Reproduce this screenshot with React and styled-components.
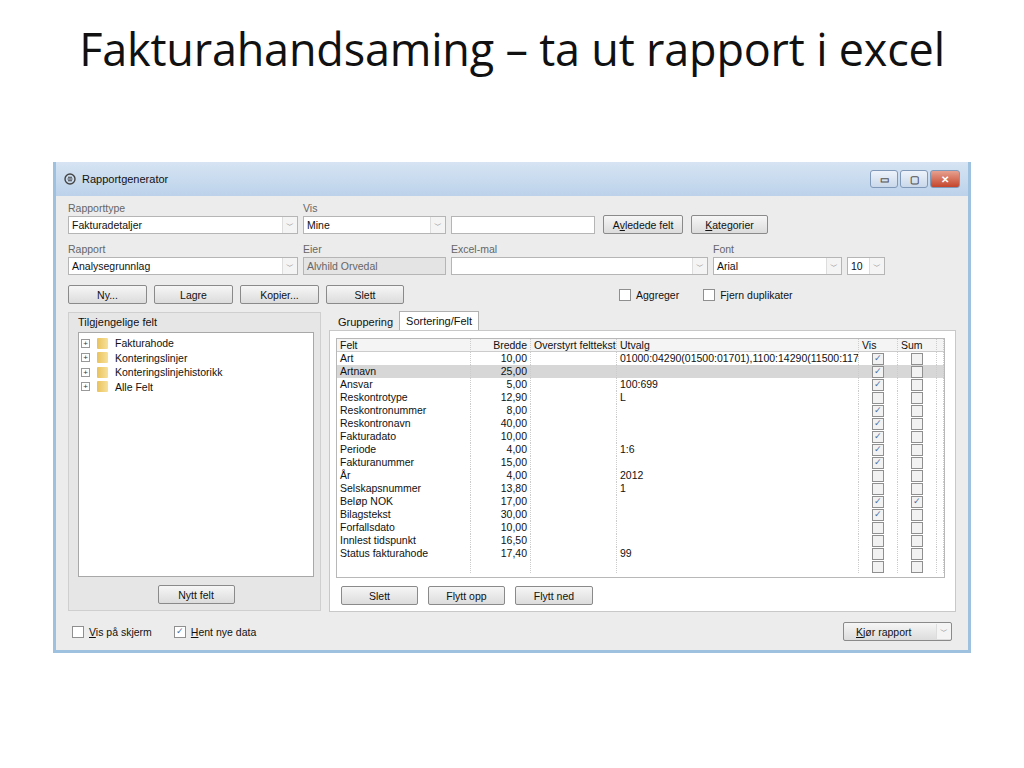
import styled, { createGlobalStyle } from 'styled-components';

const Global = createGlobalStyle`
  body { margin: 0; background: #fff; font-family: "Liberation Sans", Arial, sans-serif; }
`;

const Slide = styled.div`
  width: 1024px;
  height: 768px;
  display: flex;
  flex-direction: column;
  align-items: center;
`;

const Title = styled.h1`
  margin: 18px 0 0;
  height: 144px;
  font-weight: normal;
  font-size: 45px;
  color: #111;
  font-family: "Open Sans", "Liberation Sans", sans-serif;
  letter-spacing: -0.2px;
`;

const Win = styled.div`
  width: 912px;
  height: 488px;
  border: 3px solid #9fc1e0;
  border-top-width: 0;
  background: #ececec;
  font-size: 10.5px;
  color: #111;
  display: flex;
  flex-direction: column;
`;

const TitleBar = styled.div`
  height: 34px;
  background: linear-gradient(#d6e4f3, #bcd2ea);
  display: flex;
  align-items: center;
  padding: 0 8px;
  gap: 6px;
  font-size: 11px;
`;

const WinBtns = styled.div`
  margin-left: auto;
  display: flex;
  gap: 2px;
`;

const WinBtn = styled.div`
  width: ${p => (p.close ? 28 : 26)}px;
  height: 16px;
  border: 1px solid #8199b8;
  border-radius: 3px;
  background: ${p => (p.close ? 'linear-gradient(#e7a08f,#c4452c)' : 'linear-gradient(#eef3fa,#c9d8eb)')};
  color: ${p => (p.close ? '#fff' : '#555')};
  font-size: 10px;
  font-weight: bold;
  display: flex;
  align-items: center;
  justify-content: center;
`;

const Body = styled.div`
  flex: 1;
  padding: 6px 12px 0 12px;
  display: flex;
  flex-direction: column;
`;

const Row = styled.div`
  display: flex;
  align-items: flex-end;
  gap: ${p => p.gap || 5}px;
  margin-top: ${p => p.mt || 0}px;
`;

const Field = styled.div`
  display: flex;
  flex-direction: column;
  gap: 2px;
  width: ${p => p.w}px;
`;

const Label = styled.span`
  color: #666;
`;

const Input = styled.div`
  height: 16px;
  border: 1px solid #b5b5b5;
  background: ${p => (p.ro ? '#e4e4e4' : '#fff')};
  color: ${p => (p.ro ? '#666' : '#111')};
  display: flex;
  align-items: center;
  padding-left: 3px;
  white-space: nowrap;
`;

const Arrow = styled.span`
  margin-left: auto;
  width: 14px;
  height: 16px;
  border-left: 1px solid #ddd;
  background: #f4f4f4;
  display: flex;
  align-items: center;
  justify-content: center;
  color: #777;
  font-size: 8px;
`;

const Btn = styled.div`
  width: ${p => p.w}px;
  height: 17px;
  border: 1px solid #8a8a8a;
  border-radius: 2px;
  background: linear-gradient(#f6f6f6, #dcdcdc);
  display: flex;
  align-items: center;
  justify-content: center;
  flex-shrink: 0;
  u { text-decoration: underline; }
`;

const Check = styled.span`
  width: 10px;
  height: 10px;
  border: 1px solid #8f8f8f;
  background: ${p => (p.dim ? '#f2f2f2' : '#fff')};
  display: inline-flex;
  align-items: center;
  justify-content: center;
  color: #4a6fa5;
  font-size: 9px;
  line-height: 1;
  flex-shrink: 0;
`;

const CheckLabel = styled.label`
  display: flex;
  align-items: center;
  gap: 5px;
`;

const Main = styled.div`
  display: flex;
  gap: 8px;
  margin-top: 8px;
  height: 299px;
`;

const LeftPanel = styled.div`
  width: 256px;
  border: 1px solid #cfcfcf;
  background: #e6e6e6;
  display: flex;
  flex-direction: column;
  padding: 0 6px 6px 9px;
`;

const PanelHead = styled.div`
  font-size: 11px;
  padding: 3px 0 4px;
`;

const TreeBox = styled.div`
  background: #fff;
  border: 1px solid #a8a8a8;
  height: 242px;
  padding: 3px 2px;
`;

const TreeItem = styled.div`
  display: flex;
  align-items: center;
  gap: 3px;
  height: 14.5px;
`;

const Plus = styled.span`
  width: 7px;
  height: 7px;
  border: 1px solid #999;
  font-size: 8px;
  line-height: 7px;
  text-align: center;
  color: #333;
  margin-right: 4px;
`;

const Folder = styled.span`
  width: 11px;
  height: 11px;
  background: linear-gradient(90deg, #e8c35b, #f6e19b);
  border-radius: 1px;
  margin-right: 4px;
`;

const Center = styled.div`
  display: flex;
  justify-content: center;
  margin-top: 8px;
  gap: 10px;
`;

const RightSide = styled.div`
  flex: 1;
  display: flex;
  flex-direction: column;
`;

const Tabs = styled.div`
  display: flex;
  align-items: flex-end;
  height: 18px;
  padding-left: 3px;
`;

const Tab = styled.div`
  padding: 0 6px;
  height: ${p => (p.active ? 18 : 16)}px;
  display: flex;
  align-items: center;
  font-size: 11px;
  background: ${p => (p.active ? '#fff' : 'transparent')};
  border: ${p => (p.active ? '1px solid #b0b0b0' : 'none')};
  border-bottom: none;
`;

const TabPanel = styled.div`
  flex: 1;
  background: #fff;
  border: 1px solid #c8c8c8;
  padding: 7px 10px 6px 6px;
  display: flex;
  flex-direction: column;
`;

const Grid = styled.div`
  border: 1px solid #b8b8b8;
  height: 238px;
  display: grid;
  grid-template-columns: 134px 60px 86px 242px 39px 39px 1fr;
  grid-auto-rows: 13px;
  align-content: start;
  overflow: hidden;
`;

const Cell = styled.div`
  padding: 0 3px;
  border-right: 1px dotted #ccc;
  background: ${p => (p.head ? '#f4f4f4' : p.sel ? '#d7d7d7' : 'transparent')};
  border-bottom: ${p => (p.head ? '1px solid #ccc' : 'none')};
  text-align: ${p => p.align || 'left'};
  white-space: nowrap;
  overflow: hidden;
  line-height: 13px;
  display: ${p => (p.box ? 'flex' : 'block')};
  align-items: center;
  justify-content: center;
`;

const Footer = styled.div`
  display: flex;
  align-items: center;
  gap: 22px;
  padding: 11px 4px 0;
`;

const rows = [
  ['Art', '10,00', '01000:04290(01500:01701),1100:14290(11500:1170', 1, 0],
  ['Artnavn', '25,00', '', 1, 0],
  ['Ansvar', '5,00', '100:699', 1, 0],
  ['Reskontrotype', '12,90', 'L', 0, 0],
  ['Reskontronummer', '8,00', '', 1, 0],
  ['Reskontronavn', '40,00', '', 1, 0],
  ['Fakturadato', '10,00', '', 1, 0],
  ['Periode', '4,00', '1:6', 1, 0],
  ['Fakturanummer', '15,00', '', 1, 0],
  ['År', '4,00', '2012', 0, 0],
  ['Selskapsnummer', '13,80', '1', 0, 0],
  ['Beløp NOK', '17,00', '', 1, 1],
  ['Bilagstekst', '30,00', '', 1, 0],
  ['Forfallsdato', '10,00', '', 0, 0],
  ['Innlest tidspunkt', '16,50', '', 0, 0],
  ['Status fakturahode', '17,40', '99', 0, 0],
  ['', '', '', 0, 0],
];

const Select = ({ children, ro }) => (
  <Input ro={ro}>
    {children}
    {!ro && <Arrow>﹀</Arrow>}
  </Input>
);

export default function App() {
  return (
    <Slide>
      <Global />
      <Title>Fakturahandsaming – ta ut rapport i excel</Title>
      <Win>
        <TitleBar>
          <svg width="12" height="12" viewBox="0 0 12 12">
            <circle cx="6" cy="6" r="5" fill="none" stroke="#444" strokeWidth="1.4" />
            <path d="M3.5 6h5M4 4.2h4M4 7.8h4" stroke="#444" strokeWidth="1.1" />
          </svg>
          Rapportgenerator
          <WinBtns>
            <WinBtn>▭</WinBtn>
            <WinBtn>▢</WinBtn>
            <WinBtn close>✕</WinBtn>
          </WinBtns>
        </TitleBar>
        <Body>
          <Row>
            <Field w={230}><Label>Rapporttype</Label><Select>Fakturadetaljer</Select></Field>
            <Field w={143}><Label>Vis</Label><Select>Mine</Select></Field>
            <Field w={144}><Input /></Field>
            <Row gap={8} style={{ marginLeft: 3 }}>
              <Btn w={78}>A<u>v</u>ledede felt</Btn>
              <Btn w={75}><u>K</u>ategorier</Btn>
            </Row>
          </Row>
          <Row mt={9}>
            <Field w={230}><Label>Rapport</Label><Select>Analysegrunnlag</Select></Field>
            <Field w={143}><Label>Eier</Label><Select ro>Alvhild Orvedal</Select></Field>
            <Field w={257}><Label>Excel-mal</Label><Select /></Field>
            <Field w={129}><Label>Font</Label><Select>Arial</Select></Field>
            <Field w={38}><Select>10</Select></Field>
          </Row>
          <Row mt={10} gap={7} style={{ alignItems: 'center' }}>
            <Btn w={77}>Ny...</Btn>
            <Btn w={77}>Lagre</Btn>
            <Btn w={77}>Kopier...</Btn>
            <Btn w={76}>Slett</Btn>
            <Row gap={24} style={{ marginLeft: 208, alignItems: 'center' }}>
              <CheckLabel><Check />Aggreger</CheckLabel>
              <CheckLabel><Check />Fjern duplikater</CheckLabel>
            </Row>
          </Row>
          <Main>
            <LeftPanel>
              <PanelHead>Tilgjengelige felt</PanelHead>
              <TreeBox>
                {['Fakturahode', 'Konteringslinjer', 'Konteringslinjehistorikk', 'Alle Felt'].map(t => (
                  <TreeItem key={t}><Plus>+</Plus><Folder />{t}</TreeItem>
                ))}
              </TreeBox>
              <Center><Btn w={75}>Nytt felt</Btn></Center>
            </LeftPanel>
            <RightSide>
              <Tabs>
                <Tab>Gruppering</Tab>
                <Tab active>Sortering/Felt</Tab>
              </Tabs>
              <TabPanel>
                <Grid>
                  <Cell head>Felt</Cell>
                  <Cell head align="right">Bredde</Cell>
                  <Cell head>Overstyrt felttekst</Cell>
                  <Cell head>Utvalg</Cell>
                  <Cell head>Vis</Cell>
                  <Cell head>Sum</Cell>
                  <Cell head />
                  {rows.map(([f, b, u, v, s], i) => {
                    const sel = i === 1;
                    return [
                      <Cell key={i + 'a'} sel={sel}>{f}</Cell>,
                      <Cell key={i + 'b'} sel={sel} align="right">{b}</Cell>,
                      <Cell key={i + 'c'} sel={sel} />,
                      <Cell key={i + 'd'} sel={sel}>{u}</Cell>,
                      <Cell key={i + 'e'} sel={sel} box><Check dim>{v ? '✓' : ''}</Check></Cell>,
                      <Cell key={i + 'f'} sel={sel} box><Check dim>{s ? '✓' : ''}</Check></Cell>,
                      <Cell key={i + 'g'} sel={sel} />,
                    ];
                  })}
                </Grid>
                <Row mt={8} gap={10} style={{ paddingLeft: 5 }}>
                  <Btn w={75}>Slett</Btn>
                  <Btn w={75}>Flytt opp</Btn>
                  <Btn w={76}>Flytt ned</Btn>
                </Row>
              </TabPanel>
            </RightSide>
          </Main>
          <Footer>
            <CheckLabel><Check /><span><u>V</u>is på skjerm</span></CheckLabel>
            <CheckLabel><Check>✓</Check><span><u>H</u>ent nye data</span></CheckLabel>
            <Btn w={95} style={{ marginLeft: 'auto', justifyContent: 'space-between', padding: '0 0 0 12px' }}>
              <span><u>K</u>jør rapport</span><Arrow style={{ height: 15 }}>﹀</Arrow>
            </Btn>
          </Footer>
        </Body>
      </Win>
    </Slide>
  );
}
